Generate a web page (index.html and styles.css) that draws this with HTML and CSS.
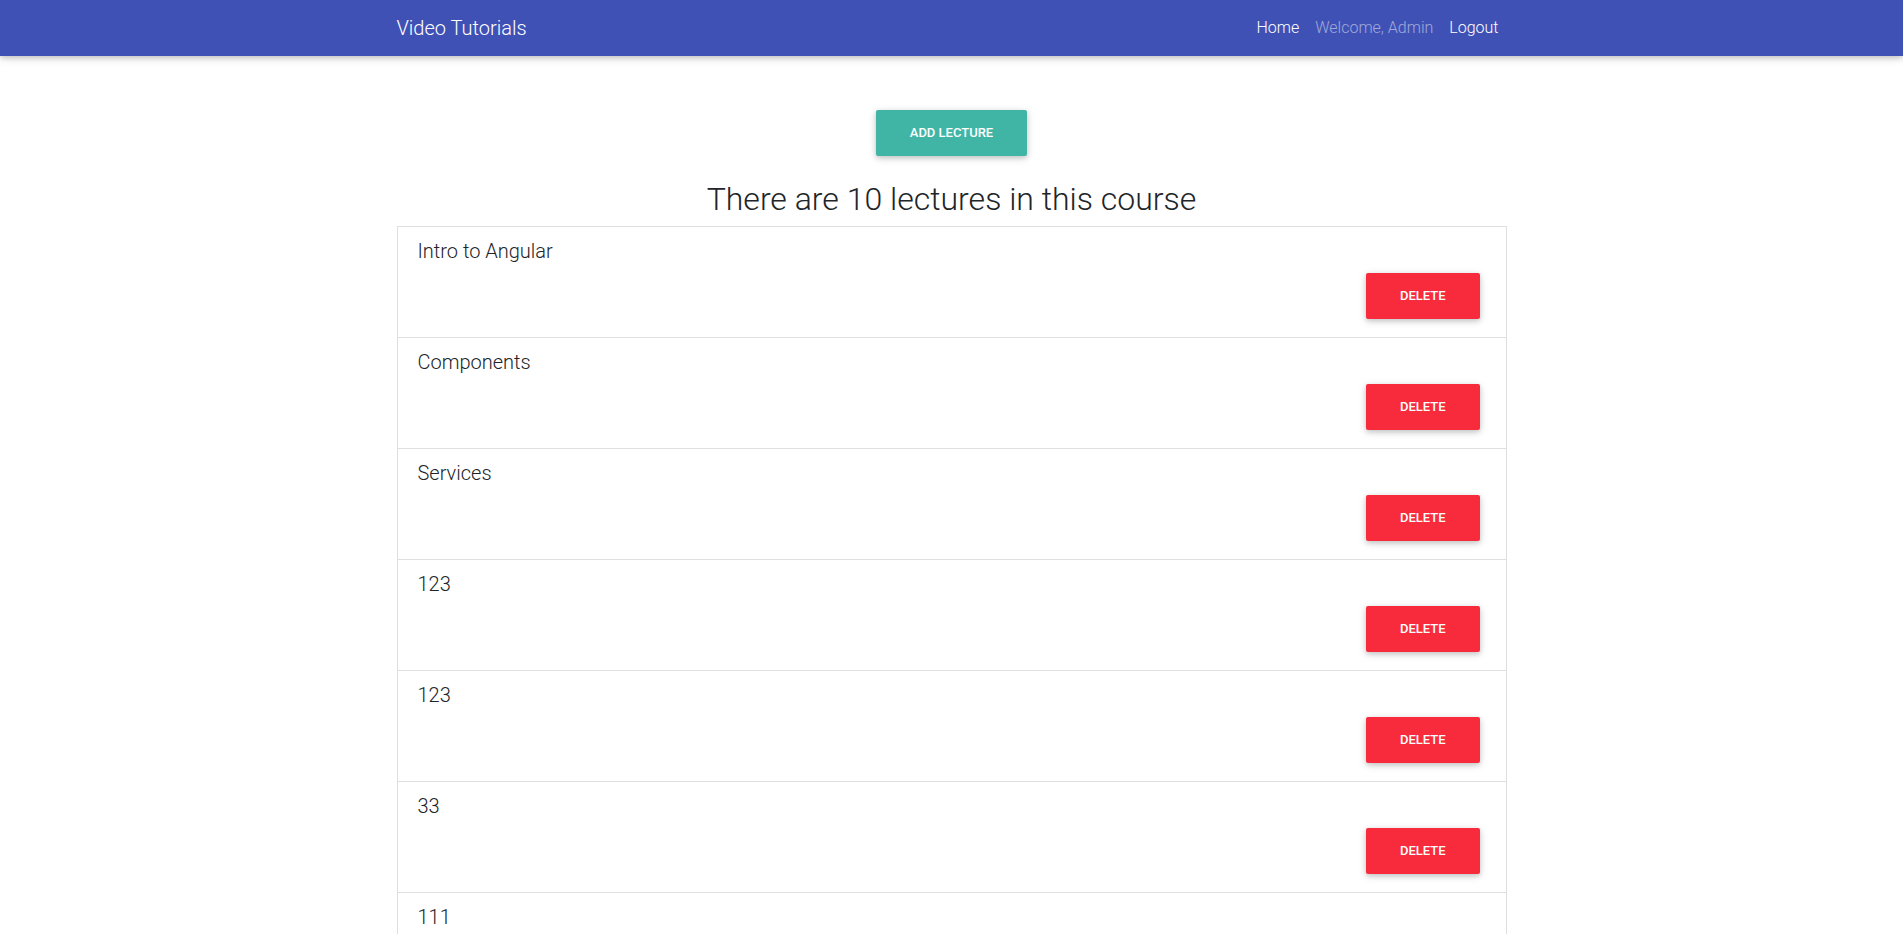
FILE: index.html
```html
<!DOCTYPE html>
<html lang="en">
<head>
<meta charset="utf-8">
<title>Video Tutorials</title>
<link rel="stylesheet" href="styles.css">
</head>
<body>
<header class="navbar">
  <div class="container nav-inner">
    <a class="brand" href="#">Video Tutorials</a>
    <nav class="nav-links">
      <a class="nav-link" href="#">Home</a>
      <span class="nav-link muted">Welcome, Admin</span>
      <a class="nav-link" href="#">Logout</a>
    </nav>
  </div>
</header>
<main class="container main">
  <div class="top-action">
    <button class="btn btn-teal">Add Lecture</button>
  </div>
  <h2 class="heading">There are 10 lectures in this course</h2>
  <div class="list">
    <div class="row"><h5 class="title">Intro to Angular</h5><div class="actions"><button class="btn btn-red">Delete</button></div></div>
    <div class="row"><h5 class="title">Components</h5><div class="actions"><button class="btn btn-red">Delete</button></div></div>
    <div class="row"><h5 class="title">Services</h5><div class="actions"><button class="btn btn-red">Delete</button></div></div>
    <div class="row"><h5 class="title">123</h5><div class="actions"><button class="btn btn-red">Delete</button></div></div>
    <div class="row"><h5 class="title">123</h5><div class="actions"><button class="btn btn-red">Delete</button></div></div>
    <div class="row"><h5 class="title">33</h5><div class="actions"><button class="btn btn-red">Delete</button></div></div>
    <div class="row"><h5 class="title">111</h5><div class="actions"><button class="btn btn-red">Delete</button></div></div>
    <div class="row"><h5 class="title">Routing</h5><div class="actions"><button class="btn btn-red">Delete</button></div></div>
    <div class="row"><h5 class="title">Forms</h5><div class="actions"><button class="btn btn-red">Delete</button></div></div>
    <div class="row"><h5 class="title">HTTP Client</h5><div class="actions"><button class="btn btn-red">Delete</button></div></div>
  </div>
</main>
</body>
</html>
```
FILE: styles.css
```css
* { box-sizing: border-box; }
html, body { margin: 0; padding: 0; }
body {
  font-family: Roboto, "Liberation Sans", sans-serif;
  color: #212529;
  background: #fff;
  font-size: 16px;
  line-height: 1.5;
}
.container {
  width: 1110px;
  margin: 0 auto;
}
.navbar {
  background: #3f51b5;
  height: 56px;
  box-shadow: 0 2px 5px 0 rgba(0,0,0,.16), 0 2px 10px 0 rgba(0,0,0,.12);
  position: relative;
  z-index: 2;
}
.nav-inner {
  height: 56px;
  display: flex;
  align-items: center;
  justify-content: space-between;
}
.brand {
  color: #fff;
  text-decoration: none;
  font-size: 20px;
  font-weight: 300;
  line-height: 30px;
}
.nav-links {
  display: flex;
  align-items: center;
}
.nav-link {
  color: #fff;
  text-decoration: none;
  font-size: 16px;
  font-weight: 300;
  padding: 0 8px;
  line-height: 24px;
}
.nav-link.muted { color: rgba(255,255,255,.5); }
.main { padding-top: 48px; }
.top-action {
  display: flex;
  justify-content: center;
}
.btn {
  font-family: Roboto, "Liberation Sans", sans-serif;
  border: 0;
  border-radius: 2px;
  color: #fff;
  text-transform: uppercase;
  font-size: 13px;
  font-weight: 500;
  line-height: 20px;
  height: 46px;
  padding: 13px 34px;
  margin: 6px;
  box-shadow: 0 2px 5px 0 rgba(0,0,0,.16), 0 2px 10px 0 rgba(0,0,0,.12);
  cursor: pointer;
}
.btn-teal { background: #40b5a6; }
.btn-red { background: #f82b3c; }
.heading {
  text-align: center;
  font-size: 32px;
  font-weight: 300;
  line-height: 1.2;
  margin: 18px 0 8px;
}
.list {
  border: 1px solid rgba(0,0,0,.125);
}
.row {
  padding: 12px 20px;
  border-top: 1px solid rgba(0,0,0,.125);
}
.row:first-child { border-top: 0; }
.title {
  font-size: 20px;
  font-weight: 300;
  line-height: 24px;
  margin: 0 0 4px;
}
.actions {
  display: flex;
  justify-content: flex-end;
}
```
